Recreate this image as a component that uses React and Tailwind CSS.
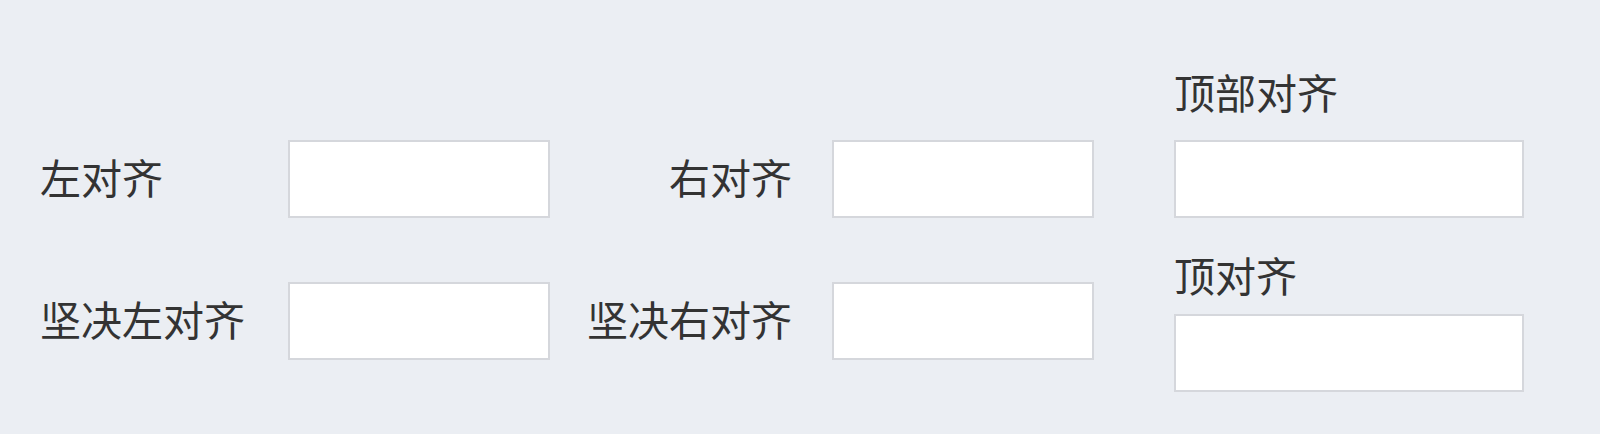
import React from 'react';

const FONT = { fontFamily: '"Noto Sans CJK SC", "Noto Sans", sans-serif' };

function Field({ label, align = 'left' }) {
  return (
    <div className="flex items-center">
      <label
        className={`w-[248px] pr-[40px] mb-[6px] text-[41px] leading-[40px] text-[#333333] whitespace-nowrap ${
          align === 'right' ? 'text-right' : 'text-left'
        }`}
      >
        {label}
      </label>
      <input type="text" className="w-[262px] h-[78px] bg-white border-2 border-[#d5d7dc] outline-none" />
    </div>
  );
}

function TopField({ label, gap }) {
  return (
    <div className="flex flex-col">
      <label className={`text-[41px] leading-[40px] text-[#333333] whitespace-nowrap ${gap}`}>{label}</label>
      <input type="text" className="w-[350px] h-[78px] bg-white border-2 border-[#d5d7dc] outline-none" />
    </div>
  );
}

export default function App() {
  return (
    <div className="w-[1600px] h-[434px] bg-[#ebeef3] pl-[40px] pt-[71px] flex items-start" style={FONT}>
      <div className="mt-[69px] flex flex-col gap-[64px]">
        <Field label="左对齐" />
        <Field label="坚决左对齐" />
      </div>
      <div className="ml-[34px] mt-[69px] flex flex-col gap-[64px]">
        <Field label="右对齐" align="right" />
        <Field label="坚决右对齐" align="right" />
      </div>
      <div className="ml-[80px] flex flex-col">
        <TopField label="顶部对齐" gap="mb-[29px]" />
        <div className="mt-[36px]">
          <TopField label="顶对齐" gap="mb-[20px]" />
        </div>
      </div>
    </div>
  );
}
